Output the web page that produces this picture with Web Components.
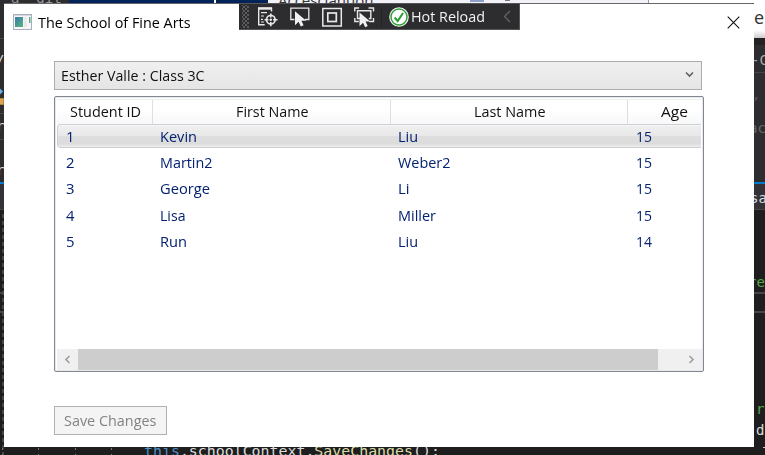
<!DOCTYPE html>
<html lang="en">
<head>
<meta charset="utf-8">
<title>The School of Fine Arts</title>
<style>
html,body{margin:0;width:765px;height:455px;overflow:hidden;background:#1e1e1e}
body{font-family:"Open Sans","Noto Sans",sans-serif;font-size:15.2px;color:#111;position:relative}
</style>
</head>
<body>
<ide-backdrop></ide-backdrop>
<school-window>
  <title-bar slot="title"><fit-text w="151">The School of Fine Arts</fit-text></title-bar>
  <combo-box><fit-text w="142">Esther Valle : Class 3C</fit-text></combo-box>
  <student-list></student-list>
  <push-button><fit-text w="91">Save Changes</fit-text></push-button>
</school-window>
<debug-toolbar></debug-toolbar>
<script>
class Base extends HTMLElement {
  constructor(){ super(); this.attachShadow({mode:'open'}).innerHTML = this.render(); }
  render(){ return '<slot></slot>'; }
}
/* Text run condensed horizontally to the width given in "w". */
class FitText extends Base {
  render(){ return '<style>:host{display:block;flex:none;white-space:pre;height:20px;line-height:18px}span{display:inline-block;white-space:pre;transform-origin:0 50%}</style><span><slot></slot></span>'; }
  connectedCallback(){
    const s = this.shadowRoot.querySelector('span');
    const w = +this.getAttribute('w') + 1.5;
    this.style.width = w + 'px';
    const r = s.getBoundingClientRect().width;
    if (r) s.style.transform = `scaleX(${w / r})`;
  }
}
class IdeBackdrop extends Base {
  render(){ return `<style>
  :host{display:block;position:absolute;inset:0;overflow:hidden;background:#1e1e1e;font-family:"DejaVu Sans Mono","Liberation Mono",monospace}
  i{position:absolute;display:block}
  b{position:absolute;font-weight:400;white-space:pre;line-height:18px;font-size:14px;color:#dcdcdc}
  </style>
  <i style="left:0;top:0;width:69px;height:182px;background:#2d2d30"></i>
  <i style="left:69px;top:0;width:199px;height:4px;background:#00245a"></i>
  <i style="left:214px;top:0;width:2px;height:3px;background:#fff"></i>
  <i style="left:268px;top:0;width:380px;height:4px;background:#f1f1f8"></i>
  <i style="left:470px;top:0;width:14px;height:2px;background:#8ba0cc"></i>
  <i style="left:505px;top:0;width:5px;height:1px;background:#777"></i>
  <i style="left:648px;top:0;width:117px;height:38px;background:#fff;border-left:1px solid #999"></i>
  <i style="left:754px;top:30px;width:11px;height:8px;background:linear-gradient(#fff,#ccc)"></i>
  <i style="left:754px;top:38px;width:11px;height:144px;background:#2d2d30"></i>
  <i style="left:754px;top:38px;width:11px;height:7px;background:#222"></i>
  <i style="left:754px;top:72px;width:11px;height:1px;background:#46464a"></i>
  <i style="left:0;top:182px;width:765px;height:2px;background:#007acc"></i>
  <i style="left:0;top:184px;width:765px;height:26px;background:#333337"></i>
  <i style="left:0;top:209px;width:765px;height:1px;background:#46464a"></i>
  <i style="left:0;top:38px;width:4px;height:1px;background:#46464a"></i>
  <i style="left:0;top:113px;width:4px;height:1px;background:#46464a"></i>
  <i style="left:0;top:139px;width:4px;height:1px;background:#46464a"></i>
  <i style="left:-3px;top:89px;width:5px;height:5px;background:#63b1ee;transform:rotate(45deg)"></i>
  <i style="left:0;top:98px;width:3px;height:5px;background:#dba756;border:solid #b28132;border-width:1px 1px 1px 0"></i>
  <i style="left:2px;top:214px;width:2px;height:241px;background:repeating-linear-gradient(#444 0 4px,#1e1e1e 4px 7px)"></i>
  <i style="left:754px;top:292px;width:11px;height:2px;background:#46464a"></i>
  <i style="left:754px;top:311px;width:11px;height:2px;background:#46464a"></i>
  <i style="left:0;top:292px;width:4px;height:2px;background:#46464a"></i>
  <i style="left:0;top:311px;width:4px;height:2px;background:#46464a"></i>
  <i style="left:2px;top:448px;width:112px;height:7px;background:repeating-linear-gradient(90deg,#777 0 1px,transparent 1px 36.4px);-webkit-mask:linear-gradient(#000 0 2px,transparent 2px 6px,#000 6px)"></i>
  <b style="left:11px;top:-11px;color:#999;font-size:14px">a  dit</b>
  <b style="left:278px;top:-9px;color:#333;font:15px/18px 'Open Sans',sans-serif">Accescianuon</b>
  <b style="left:754px;top:7px;color:#333;font:18px/20px 'Open Sans',sans-serif">e</b>
  <b style="left:-4px;top:51px">/</b>
  <b style="left:-4px;top:117px">r</b>
  <b style="left:-4px;top:161px">r</b>
  <b style="left:751px;top:51px;color:#aaa">-C</b>
  <b style="left:752px;top:85px;color:#555">,</b>
  <b style="left:749px;top:119px;color:#666">ac</b>
  <b style="left:750px;top:189px">sa</b>
  <b style="left:748px;top:273px;color:#57a64a">re</b>
  <b style="left:756px;top:400px;color:#57a64a">r</b>
  <b style="left:756px;top:421px">d</b>
  <i style="left:763px;top:447px;width:2px;height:1px;background:#ccc"></i>
  <b style="left:144px;top:442px;font-size:14.9px"><span style="color:#4d8fc4">this</span>.schoolContext.<span style="color:#dcdcaa">SaveChanges</span>();</b>`; }
}
class SchoolWindow extends Base {
  render(){ return `<style>
  :host{position:absolute;left:4px;top:3px;width:750px;height:444px;box-sizing:border-box;background:#fff;border-top:1px solid #65656a;display:flex;flex-direction:column}
  main{display:flex;flex-direction:column;align-items:flex-start;padding:20px 50px 0}
  </style><slot name="title"></slot><main><slot></slot></main>`; }
}
class TitleBar extends Base {
  render(){ return `<style>
  :host{display:flex;align-items:center;height:37px;padding:0 14px 0 9px;color:#000}
  .x{margin-left:auto;margin-bottom:1px} ::slotted(*){margin-left:6px}
  .app{margin-bottom:2px}
  </style>
  <svg class="app" width="19" height="16" viewBox="0 0 19 16"><defs><linearGradient id="g" x2="1" y2="1"><stop stop-color="#3878b4"/><stop offset="1" stop-color="#59b874"/></linearGradient></defs>
  <rect x=".5" y=".5" width="18" height="15" fill="#f7f7fa" stroke="#aab0bb"/><path d="M1 1.5h17" stroke="#d5d8df"/><rect x="2" y="3" width="8" height="10" fill="url(#g)"/><rect x="11" y="3" width="3" height="10" fill="#e8eaf0"/><rect x="16" y="3" width="1.5" height="6" fill="#5bb07d"/></svg>
  <slot></slot>
  <svg class="x" width="13" height="13"><path d="M.7.7 12.3 12.3M12.3.7.7 12.3" stroke="#111" stroke-width="1.1"/></svg>`; }
}
class ComboBox extends Base {
  render(){ return `<style>
  :host{display:flex;align-items:center;justify-content:space-between;box-sizing:border-box;width:648px;height:29px;border:1px solid #acacac;background:linear-gradient(#f0f0f0,#e5e5e5);padding:0 7px 0 6px}
  svg{margin-bottom:3px}</style><slot></slot>
  <svg width="9" height="7"><path d="M1 1.5 4.5 5 8 1.5" fill="none" stroke="#606060" stroke-width="1.6"/></svg>`; }
}
class StudentList extends Base {
  render(){
    const t = (s,w) => `<fit-text w="${w}">${s}</fit-text>`;
    const heads = [['Student ID',69.5],['First Name',71],['Last Name',70],['Age',25.5]];
    const rows = [
      [['1',7],['Kevin',35.5],['Liu',18.5],['15',14.5]],
      [['2',7],['Martin2',51],['Weber2',51],['15',14.5]],
      [['3',7],['George',48.5],['Li',10],['15',14.5]],
      [['4',7],['Lisa',24],['Miller',36.5],['15',14.5]],
      [['5',7],['Run',25.5],['Liu',18.5],['14',14.5]]];
    return `<style>
    :host{display:flex;flex-direction:column;box-sizing:border-box;width:650px;height:276px;margin-top:6px;border:1px solid #828790;border-radius:2px;padding:2px 1px 1px 2px;overflow:hidden;background:#fff;box-shadow:inset 0 0 0 1px #e6eaec}
    .head,.row{display:grid;grid-template-columns:96px 238px 237px 94px;flex:none;box-sizing:border-box}
    .head{height:25px;overflow:hidden;background:linear-gradient(#fff 40%,#f7f8fa);border-top:1px solid #eee}
    .head div{display:flex;align-items:center;justify-content:center;border-right:1px solid #dedfe1;padding-left:2px;box-sizing:border-box}
    .head div:last-child{padding-left:0}
    .clip{overflow:hidden;display:flex;flex-direction:column;gap:2.2px;margin-right:1px}
    .row{height:24px;align-items:center;width:665px;color:#042271;padding-top:2px}
    .row>:first-child{margin-left:9px}.row>:nth-child(2){margin-left:7px}.row>:nth-child(3){margin-left:7px}.row>:nth-child(4){margin-left:8px}
    .sel{border:1px solid #cfcfcf;border-radius:3px;background:linear-gradient(#f0f0f0 0,#e8e8e8 48%,#dedede 52%,#dcdcdc 85%,#eee);box-shadow:inset 0 1px #f6f6f6;grid-template-columns:95px 238px 237px 93px}
    .sel>:first-child{margin-left:8px}
    .bar{margin-top:auto;height:21px;display:flex;background:#f0f0f0;align-items:stretch}
    .bar span{flex:none;display:flex;align-items:center;justify-content:center;width:21px}
    .thumb{width:580px;background:#cdcdcd}
    .bar span:last-child{margin-left:auto;width:22px}
    </style>
    <div class="head">${heads.map(h=>`<div>${t(...h)}</div>`).join('')}</div>
    <div class="clip">${rows.map((r,i)=>`<div class="row${i?'':' sel'}">${r.map(c=>t(...c)).join('')}</div>`).join('')}</div>
    <div class="bar"><span><svg width="7" height="9"><path d="M5.5 1 2 4.5 5.5 8" fill="none" stroke="#a0a0a0" stroke-width="1.7"/></svg></span><div class="thumb"></div><span><svg width="7" height="9"><path d="M1.5 1 5 4.5 1.5 8" fill="none" stroke="#a0a0a0" stroke-width="1.7"/></svg></span></div>`;
  }
}
class PushButton extends Base {
  render(){ return `<style>:host{display:flex;align-items:center;justify-content:center;box-sizing:border-box;width:113px;height:29px;margin-top:34px;border:1px solid #adb2b5;background:#f4f4f4;color:#838383}</style><slot></slot>`; }
}
class DebugToolbar extends Base {
  render(){ return `<style>
  :host{position:absolute;left:239px;top:3px;width:281px;height:27px;box-sizing:border-box;background:#2d2d30;border:1px solid #555558;border-width:1px 1px 1px 0;display:flex;align-items:center;color:#f1f1f1}
  svg{flex:none;display:block}
  .grip{width:7px;height:23px;margin-left:3px;background:radial-gradient(circle,#5c5c60 .9px,transparent 1.1px) 0 0/4px 4px,radial-gradient(circle,#5c5c60 .9px,transparent 1.1px) 2px 2px/4px 4px}
  .sep{width:1px;height:18px;background:#222225;margin:0 7px 0 0}
  .back{margin-left:auto;margin-right:8px}
  </style>
  <div class="grip"></div>
  <svg width="132" height="25" viewBox="249 4 132 25" fill="none" stroke="#e8e8e8">
    <path d="M258.7 7.5v17.3h6M258 8.3h13.5v3.2" stroke-width="1.4"/><path d="M258 8.5h14" stroke-width="2.4"/><path d="M261 12.7h6M261 16h3M261 19.3h2M261 22h3" stroke-width="1.2"/><circle cx="270.8" cy="19.7" r="4.3" stroke-width="1.7"/><path d="M270.8 13.5v4M270.8 22v4.2M264.5 19.7h4M273 19.7h4.5" stroke-width="1.6"/><circle cx="270.8" cy="19.7" r="1.2" fill="#eee" stroke="none"/>
    <path d="M294.5 19.5h-3.7V8.2h18v11.3h-4" stroke-width="1.3"/><path d="M295 11.3v14l3.6-3.5 2.2 4.8 2.8-1.3-2.2-4.6h4.8z" fill="#f1f1f1" stroke="none"/>
    <rect x="322.8" y="8.5" width="18.5" height="17.5" stroke-width="1.5"/><rect x="327.8" y="13" width="8.5" height="8.5" stroke-width="1.7"/>
    <path d="M354.8 11.5V8h4.3M368.5 8h5v3.5M373.5 18v3.5h-4.3M354.8 18v3.5h4" stroke-width="1.4"/><path d="M360 18.5h-2.5V10.8h13.3v7.7h-2" stroke-width="1.4"/><path d="M359.5 12.5v13.7l3.5-3.4 2.2 4.4 2.5-1.2-2.1-4.4h4.6z" fill="#f1f1f1" stroke="none"/>
  </svg>
  <i class="sep"></i>
  <svg width="20" height="20"><circle cx="10" cy="10" r="9.8" fill="#f4f4f4"/><circle cx="10" cy="10" r="8" fill="#fff" stroke="#35a43b" stroke-width="1.5"/><path d="M5.6 10.5 8.7 14 14 6" fill="none" stroke="#279f30" stroke-width="2"/></svg>
  <fit-text w="72.5" style="margin-left:2px">Hot Reload</fit-text>
  <svg class="back" width="8" height="13"><path d="M7 1 1.5 6.5 7 12" fill="none" stroke="#68686c" stroke-width="1.2"/></svg>`; }
}
for (const [n,c] of Object.entries({'ide-backdrop':IdeBackdrop,'school-window':SchoolWindow,'title-bar':TitleBar,'combo-box':ComboBox,'student-list':StudentList,'push-button':PushButton,'debug-toolbar':DebugToolbar,'fit-text':FitText})) customElements.define(n,c);
</script>
</body>
</html>
